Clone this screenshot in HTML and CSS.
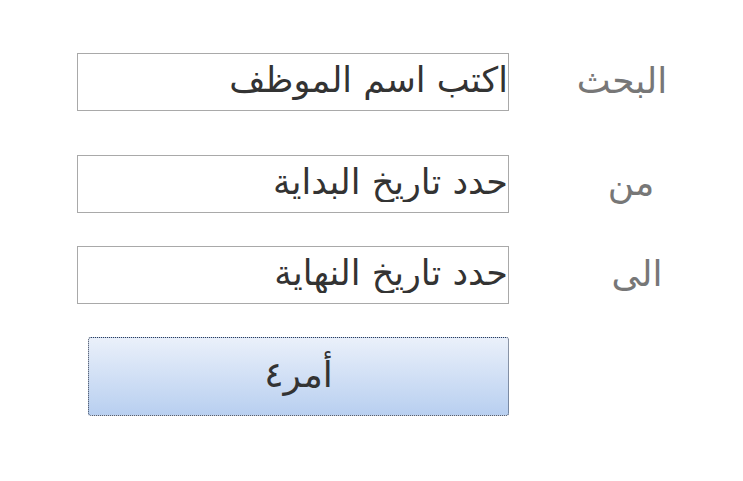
FILE: index.html
```html
<!DOCTYPE html>
<html lang="ar">
<head>
  <meta charset="UTF-8">
  <title>بحث الموظفين</title>
  <link rel="stylesheet" href="styles.css">
</head>
<body>
  <div class="form">
    <div class="row row-first">
      <input type="text" class="field" dir="rtl" value="اكتب اسم الموظف">
      <label class="label">البحث</label>
    </div>
    <div class="row">
      <input type="text" class="field" dir="rtl" value="حدد تاريخ البداية">
      <label class="label label-short">من</label>
    </div>
    <div class="row">
      <input type="text" class="field" dir="rtl" value="حدد تاريخ النهاية">
      <label class="label label-short label-end">الى</label>
    </div>
    <div class="row">
      <button type="button" class="go">أمر٤</button>
    </div>
  </div>
</body>
</html>
```

FILE: styles.css
```css
* {
    margin: 0;
    padding: 0;
    box-sizing: border-box;
}

body {
    background: #FFFFFF;
    font-family: 'DejaVu Sans', sans-serif;
}

.form {
    padding: 53px 0 0 77px;
    display: flex;
    flex-direction: column;
    gap: 33px;
}

.row {
    display: flex;
    align-items: center;
}

.row-first {
    margin-bottom: 11px;
}

.field {
    flex-shrink: 0;
    width: 432px;
    height: 58px;
    border: 1px solid #A9A9A9;
    padding: 0 0 4px 1px;
    font-family: inherit;
    font-size: 35px;
    color: #333333;
    background: #FFFFFF;
    text-align: right;
    outline: none;
}

.label {
    width: 226px;
    text-align: center;
    font-size: 36px;
    color: #777777;
    padding-bottom: 4px;
}

.label-short {
    padding-left: 18px;
}

.label-end {
    padding-left: 30px;
}

.go {
    flex-shrink: 0;
    margin-left: 11px;
    width: 421px;
    height: 79px;
    border: 1px dotted #333F55;
    border-radius: 3px;
    background: linear-gradient(to bottom, #EAF0FA, #B8CFF0);
    font-family: inherit;
    font-size: 36px;
    color: #333333;
    padding-bottom: 4px;
}
```
